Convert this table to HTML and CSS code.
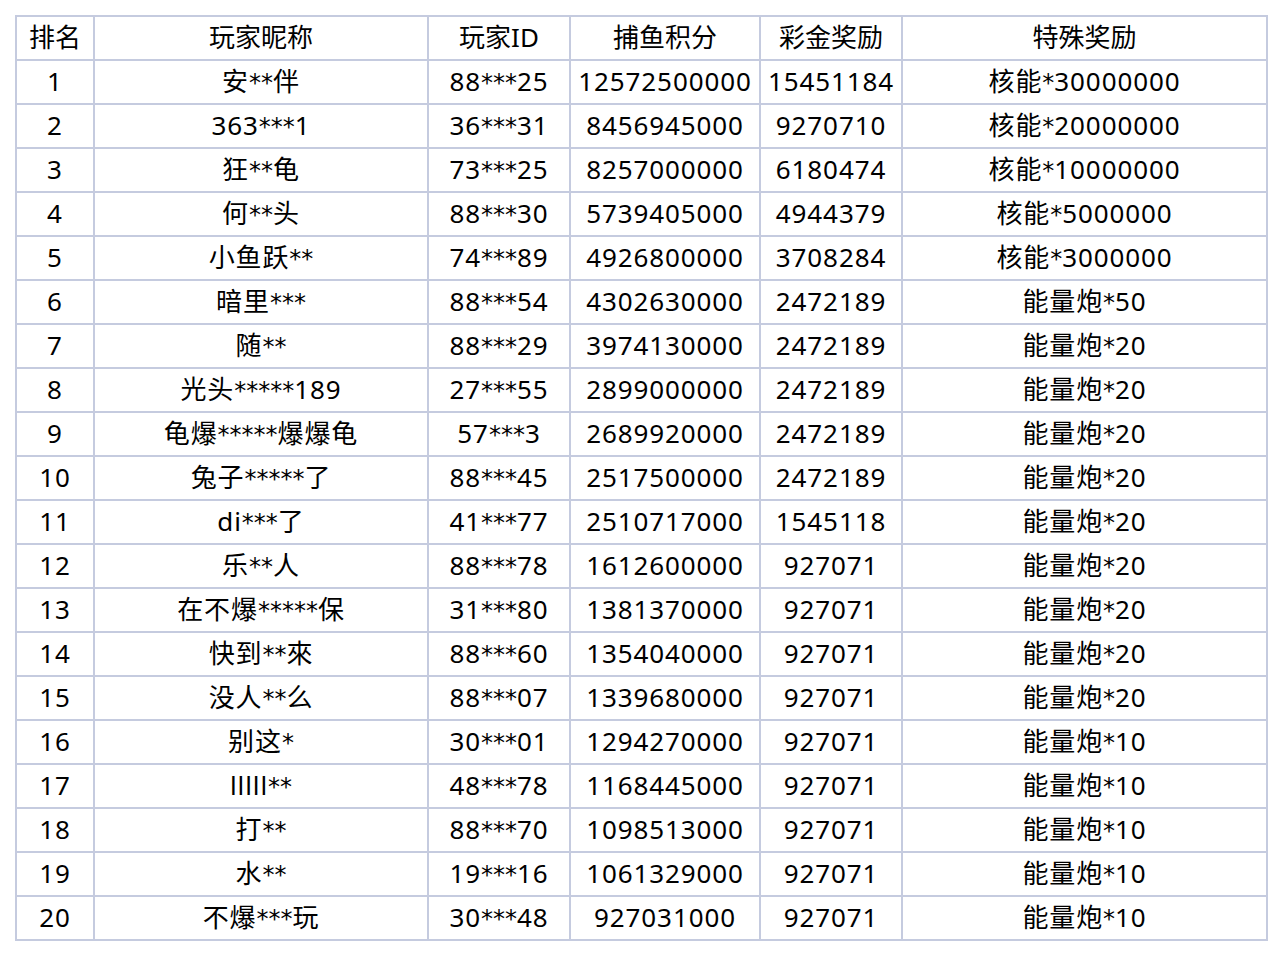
FILE: index.html
```html
<!DOCTYPE html>
<html lang="zh-CN">
<head>
<meta charset="utf-8">
<title>排名</title>
<link rel="stylesheet" href="styles.css">
</head>
<body>
<table class="rank">
<thead>
<tr><th class="c1">排名</th><th class="c2">玩家昵称</th><th class="c3">玩家ID</th><th class="c4">捕鱼积分</th><th class="c5">彩金奖励</th><th class="c6">特殊奖励</th></tr>
</thead>
<tbody>
<tr><td>1</td><td>安<span class="m">**</span>伴</td><td>88<span class="m">***</span>25</td><td>12572500000</td><td>15451184</td><td>核能<span class="m">*</span>30000000</td></tr>
<tr><td>2</td><td>363<span class="m">***</span>1</td><td>36<span class="m">***</span>31</td><td>8456945000</td><td>9270710</td><td>核能<span class="m">*</span>20000000</td></tr>
<tr><td>3</td><td>狂<span class="m">**</span>龟</td><td>73<span class="m">***</span>25</td><td>8257000000</td><td>6180474</td><td>核能<span class="m">*</span>10000000</td></tr>
<tr><td>4</td><td>何<span class="m">**</span>头</td><td>88<span class="m">***</span>30</td><td>5739405000</td><td>4944379</td><td>核能<span class="m">*</span>5000000</td></tr>
<tr><td>5</td><td>小鱼跃<span class="m">**</span></td><td>74<span class="m">***</span>89</td><td>4926800000</td><td>3708284</td><td>核能<span class="m">*</span>3000000</td></tr>
<tr><td>6</td><td>暗里<span class="m">***</span></td><td>88<span class="m">***</span>54</td><td>4302630000</td><td>2472189</td><td>能量炮<span class="m">*</span>50</td></tr>
<tr><td>7</td><td>随<span class="m">**</span></td><td>88<span class="m">***</span>29</td><td>3974130000</td><td>2472189</td><td>能量炮<span class="m">*</span>20</td></tr>
<tr><td>8</td><td>光头<span class="m">*****</span>189</td><td>27<span class="m">***</span>55</td><td>2899000000</td><td>2472189</td><td>能量炮<span class="m">*</span>20</td></tr>
<tr><td>9</td><td>龟爆<span class="m">*****</span>爆爆龟</td><td>57<span class="m">***</span>3</td><td>2689920000</td><td>2472189</td><td>能量炮<span class="m">*</span>20</td></tr>
<tr><td>10</td><td>兔子<span class="m">*****</span>了</td><td>88<span class="m">***</span>45</td><td>2517500000</td><td>2472189</td><td>能量炮<span class="m">*</span>20</td></tr>
<tr><td>11</td><td>di<span class="m">***</span>了</td><td>41<span class="m">***</span>77</td><td>2510717000</td><td>1545118</td><td>能量炮<span class="m">*</span>20</td></tr>
<tr><td>12</td><td>乐<span class="m">**</span>人</td><td>88<span class="m">***</span>78</td><td>1612600000</td><td>927071</td><td>能量炮<span class="m">*</span>20</td></tr>
<tr><td>13</td><td>在不爆<span class="m">*****</span>保</td><td>31<span class="m">***</span>80</td><td>1381370000</td><td>927071</td><td>能量炮<span class="m">*</span>20</td></tr>
<tr><td>14</td><td>快到<span class="m">**</span>來</td><td>88<span class="m">***</span>60</td><td>1354040000</td><td>927071</td><td>能量炮<span class="m">*</span>20</td></tr>
<tr><td>15</td><td>没人<span class="m">**</span>么</td><td>88<span class="m">***</span>07</td><td>1339680000</td><td>927071</td><td>能量炮<span class="m">*</span>20</td></tr>
<tr><td>16</td><td>别这<span class="m">*</span></td><td>30<span class="m">***</span>01</td><td>1294270000</td><td>927071</td><td>能量炮<span class="m">*</span>10</td></tr>
<tr><td>17</td><td>lllll<span class="m">**</span></td><td>48<span class="m">***</span>78</td><td>1168445000</td><td>927071</td><td>能量炮<span class="m">*</span>10</td></tr>
<tr><td>18</td><td>打<span class="m">**</span></td><td>88<span class="m">***</span>70</td><td>1098513000</td><td>927071</td><td>能量炮<span class="m">*</span>10</td></tr>
<tr><td>19</td><td>水<span class="m">**</span></td><td>19<span class="m">***</span>16</td><td>1061329000</td><td>927071</td><td>能量炮<span class="m">*</span>10</td></tr>
<tr><td>20</td><td>不爆<span class="m">***</span>玩</td><td>30<span class="m">***</span>48</td><td>927031000</td><td>927071</td><td>能量炮<span class="m">*</span>10</td></tr>
</tbody>
</table>
</body>
</html>
```
FILE: styles.css
```css
html, body {
  margin: 0;
  padding: 0;
  background: #ffffff;
}
body {
  padding: 15px 0 0 15px;
  font-family: "Noto Sans", "Noto Sans CJK SC", sans-serif;
  color: #000;
}
.rank {
  border-collapse: separate;
  border-spacing: 0;
  table-layout: fixed;
  border-left: 2px solid #c5cbdf;
  border-top: 2px solid #c5cbdf;
  width: 1253px;
}
.rank th, .rank td {
  padding: 0 0 2px 0;
  height: 40px;
  line-height: 40px;
  border-right: 2px solid #c5cbdf;
  border-bottom: 2px solid #c5cbdf;
  text-align: center;
  font-weight: normal;
  font-size: 26px;
  letter-spacing: 0.9px;
  white-space: nowrap;
  overflow: hidden;
}
.rank th {
  letter-spacing: 0;
}
.m {
  font-family: "DejaVu Sans", sans-serif;
  font-size: 24px;
  line-height: 0;
  letter-spacing: 0;
}
.c1 { width: 76px; }
.c2 { width: 332px; }
.c3 { width: 140px; }
.c4 { width: 188px; }
.c5 { width: 140px; }
.c6 { width: 363px; }
```
